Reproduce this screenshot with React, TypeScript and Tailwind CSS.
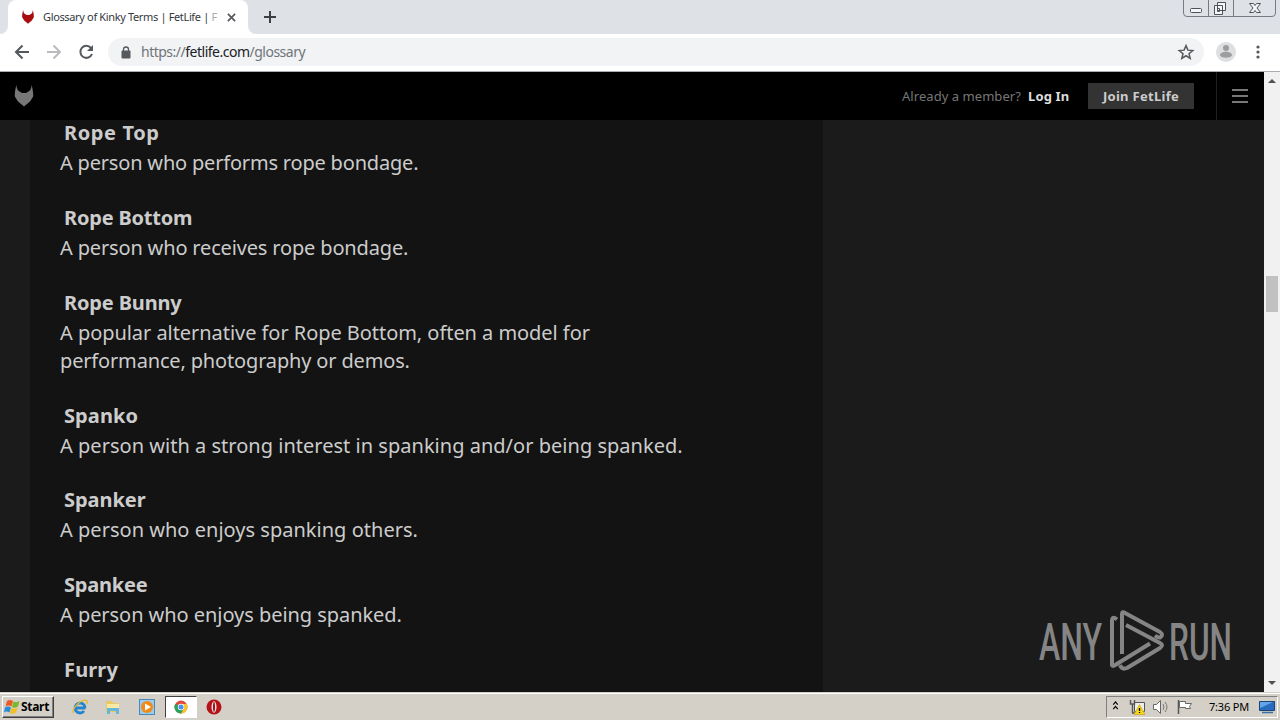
import { ReactNode } from "react";

type Line = { text: string; tracking: string };
type Entry = { term: string; tracking: string; lines: Line[] };

const entries: Entry[] = [
  {
    term: "Rope Top",
    tracking: "tracking-[0.6px]",
    lines: [{ text: "A person who performs rope bondage.", tracking: "tracking-[-0.19px]" }],
  },
  {
    term: "Rope Bottom",
    tracking: "tracking-[-0.2px]",
    lines: [{ text: "A person who receives rope bondage.", tracking: "tracking-[-0.16px]" }],
  },
  {
    term: "Rope Bunny",
    tracking: "tracking-[-0.15px]",
    lines: [
      { text: "A popular alternative for Rope Bottom, often a model for", tracking: "tracking-[-0.05px]" },
      { text: "performance, photography or demos.", tracking: "tracking-[-0.16px]" },
    ],
  },
  {
    term: "Spanko",
    tracking: "tracking-[0.1px]",
    lines: [
      {
        text: "A person with a strong interest in spanking and/or being spanked.",
        tracking: "tracking-[0.02px]",
      },
    ],
  },
  {
    term: "Spanker",
    tracking: "tracking-[-0.05px]",
    lines: [{ text: "A person who enjoys spanking others.", tracking: "tracking-[0.02px]" }],
  },
  {
    term: "Spankee",
    tracking: "tracking-[-0.2px]",
    lines: [{ text: "A person who enjoys being spanked.", tracking: "tracking-[-0.05px]" }],
  },
  { term: "Furry", tracking: "tracking-[0.15px]", lines: [] },
];

function FoxLogo({ className }: { className: string }) {
  return (
    <svg viewBox="0 0 20 22" className={className} fill="currentColor">
      <path d="M2.500 0C2.500 3.500 4 6 6 6.800L8 8H12L14 6.800C16 6 17.500 3.500 17.500 0C18.500 3 19.500 8 19.200 11.500L16 16.500L10 21.500L4 16.500L.8 11.500C.5 8 1.500 3 2.500 0Z" />
    </svg>
  );
}

function TabStrip() {
  return (
    <div className="flex h-[34px] items-start bg-[#dee1e6]">
      <div className="flex h-full w-2 items-end bg-white">
        <div className="h-full w-2 rounded-br-lg bg-[#dee1e6]" />
      </div>
      <div className="flex h-full w-[240px] items-center rounded-t-lg bg-white pl-[13px]">
        <FoxLogo className="h-[14px] w-[14px] text-[#a90d10]" />
        <div className="ml-[8px] w-[184px] text-[11px] whitespace-nowrap text-[#35383c]">
          <span className="tracking-[-0.35px]">Glossary of Kinky Terms | FetLife | </span>
          <span className="text-[#aaa]">F</span>
        </div>
        <svg viewBox="0 0 10 10" className="h-[9px] w-[9px]" stroke="#55585c" strokeWidth="1.9">
          <path d="M1 1l8 8M9 1l-8 8" />
        </svg>
      </div>
      <div className="h-full w-2 bg-white">
        <div className="h-full w-2 rounded-bl-lg bg-[#dee1e6]" />
      </div>
      <svg viewBox="0 0 12 12" className="mt-[11px] ml-[8px] h-3 w-3" stroke="#3c4043" strokeWidth="2">
        <path d="M6 0v12M0 6h12" />
      </svg>
      <svg viewBox="0 0 93 17" className="mr-1 ml-auto h-[17px] w-[93px]" fill="none" stroke="#777b82">
        <path d="M.5 0V13Q.5 16.500 4 16.500H89Q92.500 16.500 92.500 13V0M25.500 0V16M50.500 0V16" />
        <g stroke="#4f5359" fill="#f4f5f7">
          <rect x="7.500" y="8.500" width="11" height="4" rx="1" />
          <path d="M34.500 2.500h8v8h-8zM31.500 5.500h8v9h-8zM34.500 8.500h2v3h-2z" />
          <path d="M66.500 3.500h4l1.500 2 1.500-2h4l-3.500 4.500 3.500 4.500h-4l-1.500-2-1.500 2h-4l3.500-4.500z" />
        </g>
      </svg>
    </div>
  );
}

function Toolbar() {
  return (
    <div className="flex h-[38px] items-center border-b border-[#a9adb1] bg-white pb-px">
      <svg viewBox="0 0 108 20" className="h-5 w-[108px]" fill="none" stroke="#55585c" strokeWidth="2">
        <path d="M29 10H16M22.500 3.500L16 10l6.500 6.500" />
        <path d="M47 10h13M53.500 3.500L60 10l-6.500 6.500" stroke="#b9bbbe" />
        <path d="M91 6A6 6 0 1 0 92 12" />
        <path d="M93 3v6h-6z" fill="#55585c" stroke="none" />
      </svg>
      <div className="flex h-7 w-[1096px] items-center rounded-full bg-[#f1f3f4] pl-[13px]">
        <svg viewBox="0 0 10 13" className="h-[13px] w-[10px]" fill="#55585c">
          <rect x="0.500" y="4.500" width="9" height="8" rx="1" />
          <path d="M2.500 5V3.500a2.500 2.500 0 0 1 5 0V5" fill="none" stroke="#55585c" strokeWidth="1.300" />
        </svg>
        <span className="mb-px ml-[10px] text-[14px] tracking-[-0.5px] text-[#70757a]">
          https://<span className="text-[#202124]">fetlife.com</span>/glossary
        </span>
        <svg viewBox="0 0 24 24" className="mr-[9px] ml-auto h-[18px] w-[18px]" fill="none" stroke="#55585c" strokeWidth="2">
          <path d="M12 3.500l2.500 6 6.500.5-5 4.200 1.600 6.300L12 17l-5.600 3.500L8 14.200 3 10l6.500-.5z" />
        </svg>
      </div>
      <svg viewBox="0 0 20 20" className="ml-3 h-5 w-5" fill="#9b9d9f">
        <circle cx="10" cy="10" r="10" fill="#dedfe0" />
        <circle cx="10" cy="6" r="3" />
        <path d="M4 13.500c0-5 12-5 12 0-2 3-10 3-12 0z" />
      </svg>
      <svg viewBox="0 0 4 14" className="ml-5 h-[14px] w-1" fill="#55585c">
        <circle cx="2" cy="2" r="1.600" />
        <circle cx="2" cy="7" r="1.600" />
        <circle cx="2" cy="12" r="1.600" />
      </svg>
    </div>
  );
}

function SiteHeader() {
  return (
    <header className="flex h-12 shrink-0 items-center bg-black text-[13px]">
      <FoxLogo className="ml-[14px] h-[22px] w-5 text-[#777]" />
      <span className="mt-0.5 ml-auto w-[126px] tracking-[0.05px] whitespace-nowrap text-[#777]">
        Already a member?
      </span>
      <span className="mt-0.5 w-[60px] font-bold tracking-[0.15px] whitespace-nowrap text-[#ddd]">Log In</span>
      <button className="h-[26px] w-[106px] bg-[#333] pt-0.5 font-bold tracking-[0.3px] text-[#ccc]">
        Join FetLife
      </button>
      <div className="ml-[22px] flex h-full w-12 flex-col items-center justify-center gap-1 border-l border-[#202020] pr-px">
        <div className="h-0.5 w-4 bg-[#777]" />
        <div className="h-0.5 w-4 bg-[#777]" />
        <div className="h-0.5 w-4 bg-[#777]" />
      </div>
    </header>
  );
}

function Glossary() {
  return (
    <main className="ml-[30px] h-[572px] w-[793px] overflow-hidden bg-[#131313] pl-[30px] text-[20px] text-[#ccc]">
      {entries.map((entry) => (
        <div key={entry.term} className="mb-[27.500px]">
          <h2 className={`-mt-px h-[30px] pl-1 leading-[28px] font-bold ${entry.tracking}`}>{entry.term}</h2>
          {entry.lines.map((line) => (
            <p key={line.text} className={`h-[28.250px] leading-[28px] whitespace-nowrap ${line.tracking}`}>
              {line.text}
            </p>
          ))}
        </div>
      ))}
    </main>
  );
}

function Scrollbar() {
  return (
    <div className="flex w-4 flex-col items-center bg-[#f1f1f1]">
      <svg viewBox="0 0 8 4" className="mt-[7px] h-1 w-2" fill="#505050">
        <path d="M0 4l4-4 4 4z" />
      </svg>
      <div className="mt-[193px] h-9 w-3 bg-[#c1c1c1]" />
      <svg viewBox="0 0 8 4" className="mt-auto mb-[7px] h-1 w-2" fill="#505050">
        <path d="M0 0l4 4 4-4z" />
      </svg>
    </div>
  );
}

function Watermark() {
  return (
    <svg
      viewBox="0 0 200 70"
      className="absolute top-[605px] left-[1036px] h-[70px] w-[200px] overflow-visible font-['Roboto'] font-medium"
      fill="#858585"
    >
      <text x="3" y="54.500" fontSize="52" textLength="63" lengthAdjust="spacingAndGlyphs">ANY</text>
      <text x="133" y="54.500" fontSize="52" textLength="63" lengthAdjust="spacingAndGlyphs">RUN</text>
      <g fill="none" stroke="#858585" strokeWidth="4" strokeLinejoin="round">
        <path d="M81 14.500Q76 10.500 76 16V60Q77 62 80 59.500L114 38.500" />
        <path d="M86 49V9Q86 6 89 8L124 27Q128 30 124 32.500Q122 33 119 30.500" />
        <path d="M90 20L124 38Q128 40 124 43L91 63Q86 65 84 60" />
      </g>
    </svg>
  );
}

function TaskIcon({ children, className }: { children: ReactNode; className: string }) {
  return (
    <svg viewBox="0 0 16 16" className={`h-4 w-4 shrink-0 ${className}`}>
      {children}
    </svg>
  );
}

function Taskbar() {
  return (
    <footer className="flex h-7 items-center border-t border-[#d4d0c8] bg-[#d4d0c8] pt-px shadow-[inset_0_1px_0_#fff]">
      <button className="ml-0.5 flex h-[22px] w-[52px] items-center border border-t-white border-r-[#404040] border-b-[#404040] border-l-white pl-px text-[12px] font-bold tracking-[-0.3px] shadow-[inset_-1px_-1px_0_#808080]">
        <TaskIcon className="mr-px">
          <path d="M3 2q3-2 6 0L7.500 7.500Q4.500 5.500 1.500 7.500z" fill="#ed5b25" />
          <path d="M9.500 2.500q3 1.500 6-.5L14 7.500q-3 2-6 .5z" fill="#78b82a" />
          <path d="M1 8.500q3-2 6 0l-1.500 5q-3-2-5.500 0z" fill="#268ed5" />
          <path d="M7.500 9q3 1.500 6-.5l-1.500 5q-3 2-6 .5z" fill="#f5bf20" />
        </TaskIcon>
        Start
      </button>
      <TaskIcon className="ml-[18px]">
        <path d="M13.500 9H4.500M13 9a5 5 0 1 0-1 3" fill="none" stroke="#2384cf" strokeWidth="2.800" />
        <path d="M1.500 14C-1 10 11-2 15 2q1 1-.5 3" fill="none" stroke="#e7ba2d" strokeWidth="1.300" />
      </TaskIcon>
      <TaskIcon className="ml-[17px]">
        <path d="M1 2h6l1 2h6v9H1z" fill="#e8c963" />
        <path d="M2 5h12v6H2z" fill="#f8e9a6" />
        <path d="M2 15V9h12v6h-3v-3H5v3z" fill="#65b7dc" />
      </TaskIcon>
      <TaskIcon className="ml-[18px]">
        <rect x=".5" y=".5" width="15" height="15" fill="#9bcbed" stroke="#4689bd" />
        <circle cx="8" cy="8" r="6" fill="#f28a18" />
        <path d="M6 4.500l6 3.500-6 3.500z" fill="#fff" />
      </TaskIcon>
      <div className="ml-[10px] flex h-[22px] w-8 items-center justify-center border border-t-[#404040] border-r-white border-b-white border-l-[#404040] bg-white">
        <TaskIcon className="">
          <circle cx="8" cy="8" r="6.500" fill="#df4b3c" />
          <path d="M8 8L2.400 4.700A6.500 6.500 0 0 0 8 14.500l3-5z" fill="#28a45c" />
          <path d="M8 5h5.800A6.500 6.500 0 0 1 8 14.500l3-5z" fill="#f5c52b" />
          <circle cx="8" cy="8" r="3.200" fill="#fff" />
          <circle cx="8" cy="8" r="2.500" fill="#4a8ef0" />
        </TaskIcon>
      </div>
      <TaskIcon className="ml-[9px]">
        <circle cx="8" cy="8" r="7.500" fill="#b51218" />
        <ellipse cx="8" cy="8" rx="2.500" ry="5.800" fill="#f0e3e3" />
        <ellipse cx="8" cy="8" rx="1" ry="4.900" fill="#a00f14" />
      </TaskIcon>
      <div className="mr-0.5 ml-auto flex h-[22px] w-[172px] items-center border border-t-[#808080] border-r-white border-b-white border-l-[#808080] text-[11px]">
        <svg viewBox="0 0 7 10" className="mb-[3px] ml-[5px] h-[9px] w-[7px]" fill="none" stroke="#000" strokeWidth="1.300">
          <path d="M1 4l2.500-3L6 4M1 9l2.500-3L6 9" />
        </svg>
        <TaskIcon className="ml-[10px]">
          <path d="M5.500 3.500h10v9h-10z" fill="#eee" stroke="#555" />
          <path d="M1.500 1v4h4V1M3.500 5v9h4" fill="none" stroke="#555" strokeWidth="1.400" />
          <path d="M10.500 5.500l5.500 10H5z" fill="#f5d619" stroke="#c69b0a" strokeWidth=".6" />
          <path d="M10.500 9v3M10.500 13v1" stroke="#000" strokeWidth="1.300" />
        </TaskIcon>
        <TaskIcon className="ml-[8px]">
          <path d="M.5 5.500h3l4-4v13l-4-4h-3z" fill="#fff" stroke="#666" />
          <path d="M10 5q2 3 0 6M12 3q4 5 0 10" fill="none" stroke="#777" />
        </TaskIcon>
        <TaskIcon className="ml-[8px]">
          <path d="M1.500 1v14" stroke="#555" strokeWidth="1.500" />
          <path d="M2.500 2.500h6v2h6l-2 3 1 2h-5v-1h-6z" fill="#fff" stroke="#666" />
        </TaskIcon>
        <span className="ml-[16px] w-[42px] tracking-[-0.2px] whitespace-nowrap">7:36 PM</span>
        <TaskIcon className="ml-[8px]">
          <path d="M.5 2.500h15v9H.5z" fill="#286bc0" stroke="#174779" />
          <path d="M1 3h13L1 9z" fill="#63a5e7" />
          <path d="M3 13.500h11" stroke="#3a70a7" strokeWidth="1.500" />
        </TaskIcon>
      </div>
    </footer>
  );
}

export default function App() {
  return (
    <div className="relative flex h-[720px] w-[1280px] flex-col overflow-hidden font-['Noto_Sans',sans-serif]">
      <TabStrip />
      <Toolbar />
      <div className="flex h-[620px]">
        <div className="flex w-[1264px] flex-col bg-[#1b1b1b]">
          <SiteHeader />
          <Glossary />
        </div>
        <Scrollbar />
      </div>
      <Taskbar />
      <Watermark />
    </div>
  );
}
